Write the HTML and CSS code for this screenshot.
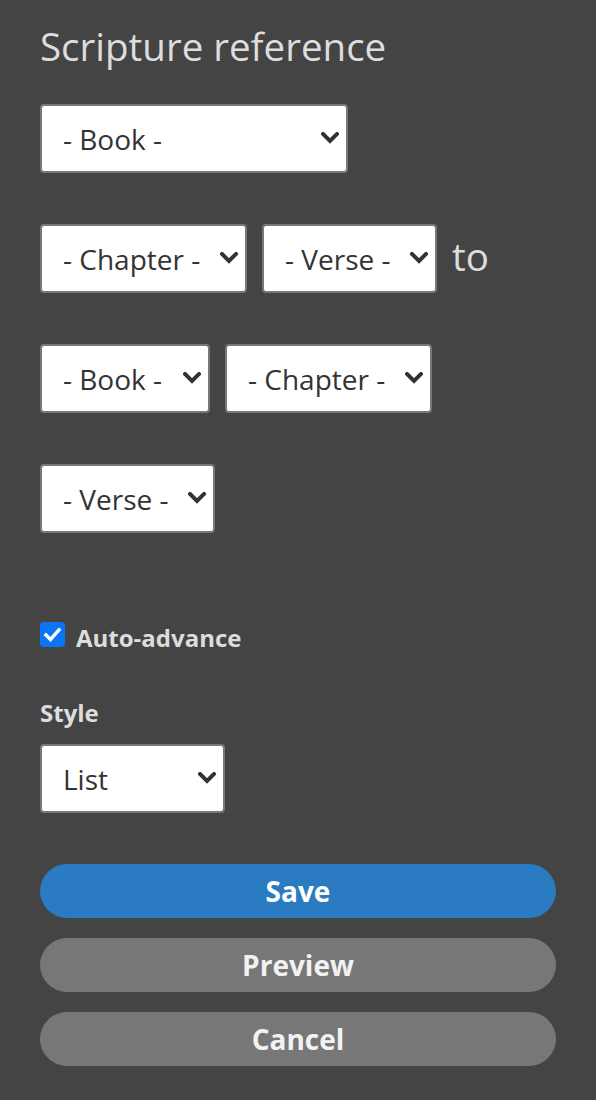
FILE: index.html
```html
<!DOCTYPE html>
<html lang="en">
<head>
<meta charset="utf-8">
<title>Scripture reference</title>
<link rel="stylesheet" href="styles.css">
</head>
<body>
<div class="panel">
  <h1 class="title">Scripture reference</h1>

  <div class="row">
    <span class="sel w-book1">
      <select><option>- Book -</option></select>
      <svg class="chev" viewBox="0 0 18 12"><path d="M2 2l7 7 7-7"/></svg>
    </span>
  </div>

  <div class="row">
    <span class="sel w-chapter1">
      <select><option>- Chapter -</option></select>
      <svg class="chev" viewBox="0 0 18 12"><path d="M2 2l7 7 7-7"/></svg>
    </span>
    <span class="sel w-verse1">
      <select><option>- Verse -</option></select>
      <svg class="chev" viewBox="0 0 18 12"><path d="M2 2l7 7 7-7"/></svg>
    </span>
    <span class="to">to</span>
  </div>

  <div class="row">
    <span class="sel w-book2">
      <select><option>- Book -</option></select>
      <svg class="chev" viewBox="0 0 18 12"><path d="M2 2l7 7 7-7"/></svg>
    </span>
    <span class="sel w-chapter2">
      <select><option>- Chapter -</option></select>
      <svg class="chev" viewBox="0 0 18 12"><path d="M2 2l7 7 7-7"/></svg>
    </span>
  </div>

  <div class="row">
    <span class="sel w-verse2">
      <select><option>- Verse -</option></select>
      <svg class="chev" viewBox="0 0 18 12"><path d="M2 2l7 7 7-7"/></svg>
    </span>
  </div>

  <label class="check-row">
    <span class="checkbox">
      <svg viewBox="0 0 25 25"><path d="M6 13l4.5 4.5L19 8"/></svg>
    </span>
    <span class="check-label">Auto-advance</span>
  </label>

  <div class="field-label">Style</div>
  <div class="row style-row">
    <span class="sel w-style">
      <select><option>List</option></select>
      <svg class="chev" viewBox="0 0 18 12"><path d="M2 2l7 7 7-7"/></svg>
    </span>
  </div>

  <div class="buttons">
    <button class="btn btn-primary">Save</button>
    <button class="btn btn-secondary">Preview</button>
    <button class="btn btn-secondary">Cancel</button>
  </div>
</div>
</body>
</html>
```

FILE: styles.css
```css
html, body {
  margin: 0;
  padding: 0;
  background: #444444;
}

body {
  font-family: "Open Sans", "Noto Sans", sans-serif;
  color: #dddddd;
}

.panel {
  padding: 20px 40px 0 40px;
}

.title {
  margin: 0 0 32px 0;
  font-size: 38.5px;
  font-weight: 400;
  line-height: 52px;
  color: #dddddd;
}

.row {
  display: flex;
  align-items: center;
  gap: 15px;
  margin-bottom: 51px;
}

.sel {
  position: relative;
  display: block;
  flex: none;
  height: 69px;
}

.sel select {
  -webkit-appearance: none;
  appearance: none;
  display: block;
  box-sizing: border-box;
  width: 100%;
  height: 69px;
  margin: 0;
  padding: 0 40px 0 21px;
  border: 2px solid #777777;
  border-radius: 4px;
  background: #ffffff;
  font-family: "Open Sans", "Noto Sans", sans-serif;
  font-size: 28px;
  color: #333333;
  outline: none;
}

.chev {
  position: absolute;
  right: 9px;
  top: 28px;
  width: 18px;
  height: 12px;
  pointer-events: none;
}

.chev path {
  fill: none;
  stroke: #333333;
  stroke-width: 4;
  stroke-linecap: square;
  stroke-linejoin: miter;
}

.w-book1 { width: 308px; }
.w-chapter1 { width: 207px; }
.w-verse1 { width: 175px; }
.w-book2 { width: 170px; }
.w-chapter2 { width: 207px; }
.w-verse2 { width: 175px; }
.w-style { width: 185px; }

.to {
  font-size: 38.5px;
  line-height: 1;
  color: #dddddd;
  margin-top: -4px;
}

.check-row {
  display: flex;
  align-items: flex-start;
  gap: 11px;
  margin-top: 89px;
}

.checkbox {
  box-sizing: border-box;
  width: 25px;
  height: 25px;
  border-radius: 4px;
  background: #0b75f2;
  display: flex;
  flex: none;
}

.checkbox svg {
  width: 25px;
  height: 25px;
}

.checkbox path {
  fill: none;
  stroke: #ffffff;
  stroke-width: 3.4;
  stroke-linecap: square;
}

.check-label {
  font-size: 24px;
  font-weight: 700;
  line-height: 32px;
  color: #dddddd;
}

.field-label {
  margin-top: 43px;
  margin-bottom: 15px;
  font-size: 24px;
  font-weight: 700;
  line-height: 32px;
  color: #dddddd;
}

.style-row {
  margin-bottom: 51px;
}

.buttons {
  display: flex;
  flex-direction: column;
  gap: 20px;
}

.btn {
  display: block;
  width: 100%;
  height: 54px;
  border: none;
  border-radius: 27px;
  font-family: "Open Sans", "Noto Sans", sans-serif;
  font-size: 28px;
  font-weight: 700;
  padding: 0;
}

.btn-primary {
  background: #2a7bc1;
  color: #ffffff;
}

.btn-secondary {
  background: #777777;
  color: #f2f2f2;
}
```
